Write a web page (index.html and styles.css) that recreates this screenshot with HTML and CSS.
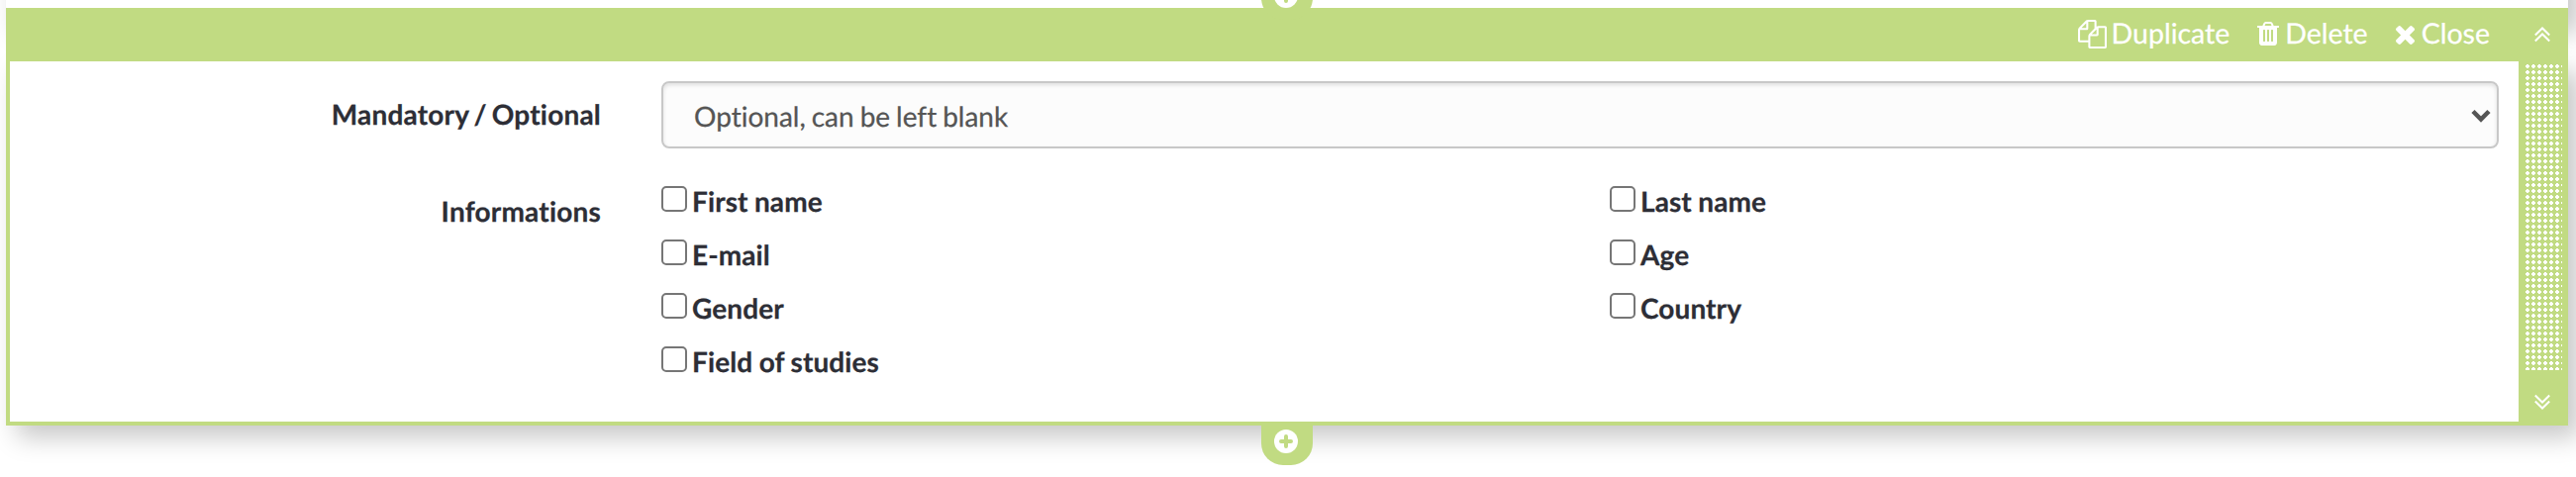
FILE: index.html
```html
<!DOCTYPE html>
<html lang="en">
<head>
<meta charset="utf-8">
<title>Form editor</title>
<link rel="stylesheet" href="styles.css">
</head>
<body>
<div class="previous"></div>
<section class="panel">
  <header class="bar">
    <a class="action"><svg class="copy" viewBox="0 0 1792 1792"><path d="M1696 384q40 0 68 28t28 68v1216q0 40-28 68t-68 28h-960q-40 0-68-28t-28-68v-288h-544q-40 0-68-28t-28-68v-672q0-40 20-88t48-76l408-408q28-28 76-48t88-20h416q40 0 68 28t28 68v328q68-40 128-40h416zm-544 213l-299 299h299v-299zm-640-384l-299 299h299v-299zm196 647l316-316v-416h-384v416q0 40-28 68t-68 28h-416v640h512v-256q0-40 20-88t48-76zm956 804v-1152h-384v416q0 40-28 68t-68 28h-416v640h896z"/></svg>Duplicate</a>
    <a class="action"><svg class="trash" viewBox="192 128 1408 1536"><path d="M704 1376v-704q0-14-9-23t-23-9h-64q-14 0-23 9t-9 23v704q0 14 9 23t23 9h64q14 0 23-9t9-23zm256 0v-704q0-14-9-23t-23-9h-64q-14 0-23 9t-9 23v704q0 14 9 23t23 9h64q14 0 23-9t9-23zm256 0v-704q0-14-9-23t-23-9h-64q-14 0-23 9t-9 23v704q0 14 9 23t23 9h64q14 0 23-9t9-23zm-544-992h448l-48-117q-7-9-17-11h-317q-10 2-17 11zm928 32v64q0 14-9 23t-23 9h-96v948q0 83-47 143.500t-113 60.500h-832q-66 0-113-58.500t-47-141.500v-952h-96q-14 0-23-9t-9-23v-64q0-14 9-23t23-9h309l70-167q15-37 54-63t79-26h320q40 0 79 26t54 63l70 167h309q14 0 23 9t9 23z"/></svg>Delete</a>
    <a class="action"><svg class="cross" viewBox="302 366 1188 1188"><path d="M1490 1322q0 40-28 68l-136 136q-28 28-68 28t-68-28l-294-294-294 294q-28 28-68 28t-68-28l-136-136q-28-28-28-68t28-68l294-294-294-294q-28-28-28-68t28-68l136-136q28-28 68-28t68 28l294 294 294-294q28-28 68-28t68 28l136 136q28 28 28 68t-28 68l-294 294 294 294q28 28 28 68z"/></svg>Close</a>
  </header>
  <form class="content">
    <div class="row">
      <label class="name">Mandatory / Optional</label>
      <div class="select"><span>Optional, can be left blank</span><svg class="caret" viewBox="0 0 20 14"><path d="M2 2.500l8 8 8-8"/></svg></div>
    </div>
    <div class="row options-row">
      <label class="name">Informations</label>
      <div class="options">
        <label class="check"><input type="checkbox">First name</label>
        <label class="check"><input type="checkbox">Last name</label>
        <label class="check"><input type="checkbox">E-mail</label>
        <label class="check"><input type="checkbox">Age</label>
        <label class="check"><input type="checkbox">Gender</label>
        <label class="check"><input type="checkbox">Country</label>
        <label class="check"><input type="checkbox">Field of studies</label>
      </div>
    </div>
  </form>
  <aside class="handle">
    <svg class="chevrons" viewBox="0 0 16 16"><path d="M.8 8.500L8 1.500l7.200 7M.8 14.500L8 7.500l7.200 7"/></svg>
    <div class="grip"></div>
    <svg class="chevrons" viewBox="0 0 16 16"><path d="M.8 1.500L8 8.500l7.200-7M.8 7.500L8 14.500l7.200-7"/></svg>
  </aside>
</section>
<div class="add add-before"><svg viewBox="0 0 24 24"><circle cx="12" cy="12" r="12"/><path d="M12 7v10M7 12h10"/></svg></div>
<div class="add add-after"><svg viewBox="0 0 24 24"><circle cx="12" cy="12" r="12"/><path d="M12 7v10M7 12h10"/></svg></div>
</body>
</html>
```
FILE: styles.css
```css
* { box-sizing: border-box; }
html, body { height: 100%; }
body {
  margin: 0;
  padding: 8px 8px 0 6px;
  position: relative;
  z-index: 0;
  overflow: hidden;
  background: #fff;
  color: #2d2e36;
  font-family: Lato, sans-serif;
  font-size: 28px;
  font-variant-ligatures: none;
  text-rendering: geometricPrecision;
  -webkit-text-stroke: .25px currentColor;
}
.previous {
  position: absolute;
  z-index: -1;
  left: 6px;
  right: 8px;
  top: -400px;
  height: 422px;
  box-shadow: 11px 12px 24px rgba(0, 0, 0, .22);
}
.panel {
  position: relative;
  display: grid;
  grid-template: 54px 1fr / 1fr 50px;
  height: 422px;
  background: #c1db82;
}
.panel::before {
  content: "";
  position: absolute;
  z-index: -1;
  inset: 52px 0 0;
  box-shadow: 11px 12px 24px rgba(0, 0, 0, .22);
}
.bar {
  display: flex;
  justify-content: flex-end;
  align-items: center;
  gap: 28px;
  padding: 0 29px 3px 0;
  color: #fff;
  font-size: 28.500px;
}
.action { display: flex; align-items: center; line-height: 34px; }
.action svg { fill: #fff; }
.action .copy { width: 29px; height: 29px; margin: 1px 5px 0 0; }
.trash { width: 22px; height: 24px; margin: 1px 6px 0 0; }
.action .cross { width: 19px; height: 19px; margin: 3px 7px 0 0; }
.content { grid-row: 2; margin: 0 0 4px 4px; padding: 20px 20px 0 0; background: #fff; }
.row { display: flex; }
.name {
  width: 597px;
  margin-right: 61px;
  padding-top: 16px;
  text-align: right;
  font-weight: 700;
  line-height: 34px;
  letter-spacing: .2px;
  word-spacing: -2px;
}
.select {
  flex: 1;
  display: flex;
  align-items: center;
  justify-content: space-between;
  height: 68px;
  padding: 2px 6px 0 31px;
  border: 2px solid #c8c8c8;
  border-radius: 8px;
  background: #fcfcfc;
  box-shadow: inset 0 2px 4px rgba(0, 0, 0, .12);
  color: #555;
  word-spacing: -1.200px;
}
.caret { width: 20px; height: 14px; fill: none; stroke: #555; stroke-width: 4.500; }
.options-row { margin-top: 30px; }
.options { flex: 1; display: grid; grid-template-columns: 958px 1fr; grid-auto-rows: 54px; padding-top: 6px; }
.check { display: flex; align-items: flex-start; font-weight: 700; line-height: 34px; letter-spacing: .1px; word-spacing: -.5px; }
.check input { appearance: none; width: 26px; height: 26px; margin: 2px 5px 0 0; border: 2px solid #767676; border-radius: 5px; background: #fff; }
.handle {
  grid-column: 2;
  grid-row: 1 / 3;
  display: flex;
  flex-direction: column;
  padding: 19px 0 0;
}
.chevrons { width: 16px; height: 16px; margin-left: 16px; fill: none; stroke: #fff; stroke-width: 2; }
.grip {
  width: 37px;
  height: 309px;
  margin: 22px 0 24px 7px;
  background-image: radial-gradient(circle at 2px 2px, #fff 1.900px, transparent 2.100px);
  background-size: 6px 6px;
}
.add {
  position: absolute;
  left: 1274px;
  width: 52px;
  height: 40px;
  padding: 4px 0 0 13px;
  border-radius: 0 0 22px 22px;
  background: #c1db82;
}
.add svg { display: block; width: 24px; height: 24px; fill: #fff; }
.add path { stroke: #c1db82; stroke-width: 4; stroke-linecap: round; }
.add-before { top: -20px; }
.add-after { top: 430px; }
```
